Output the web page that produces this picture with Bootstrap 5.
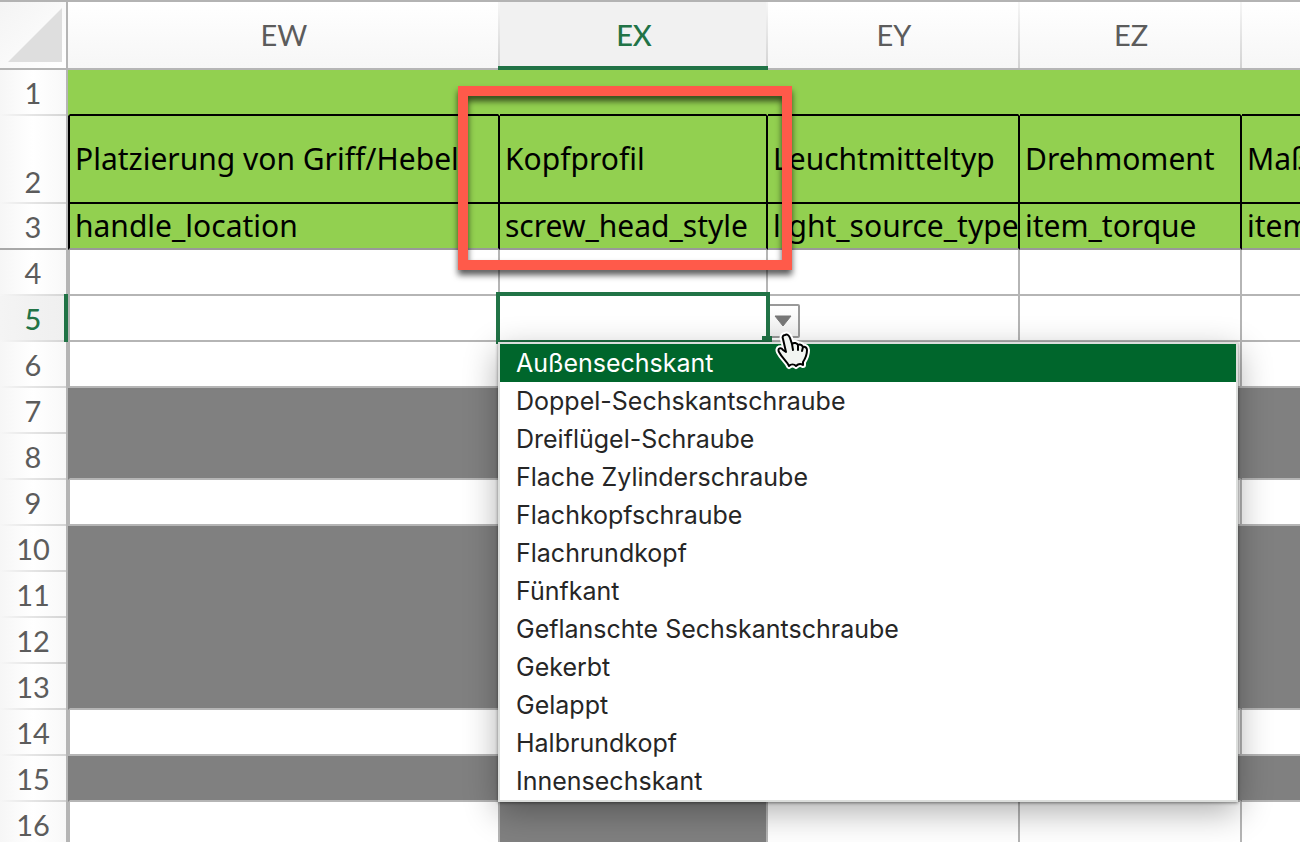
<!DOCTYPE html>
<html lang="de">
<head>
<meta charset="utf-8">
<meta name="viewport" content="width=device-width, initial-scale=1">
<title>Tabelle</title>
<link href="https://cdn.jsdelivr.net/npm/bootstrap@5.3.0/dist/css/bootstrap.min.css" rel="stylesheet">
<style>
:root { --line:#b5b5b5; --accent:#217346; --lime:#92d050; --gray:#808080; }
html, body { height:100%; }
body { font-family:Lato,"Liberation Sans",sans-serif; font-size:29px; line-height:36px; color:#000; background:#fff; }
.sheet { table-layout:fixed; border-collapse:separate; border-spacing:0; border-top:2px solid #b3b3b3; }
.sheet th, .sheet td { padding:0; white-space:nowrap; height:46px; }
.sheet thead th { height:68px; font-weight:400; text-align:center; color:#5c5c5c; background:linear-gradient(#fff,#f6f6f6); border-bottom:2px solid var(--line); position:relative; }
.sheet thead th::after { content:""; position:absolute; right:0; top:0; bottom:0; width:2px; background:linear-gradient(#f6f6f6,#d2d2d2); }
.sheet thead th:last-child::after { display:none; }
.sheet thead th.corner { background:linear-gradient(135deg,#f4f4f4,#fff); }
.sheet thead th.corner::after { background:var(--line); }
.corner svg { display:block; margin-left:8px; }
.sheet thead th.picked { color:var(--accent); background:#f1f1f1; font-weight:500; }
.sheet thead th.picked::before { content:""; position:absolute; left:-2px; right:0; bottom:-2px; height:4px; background:var(--accent); z-index:1; }
.sheet tbody th { font-weight:400; text-align:center; color:#5c5c5c; vertical-align:middle; position:relative; background:linear-gradient(90deg,#f6f6f6,#fff 50%,#f8f8f8); border-right:2px solid var(--line); }
.sheet tbody th::after { content:""; position:absolute; left:0; right:0; bottom:0; height:2px; background:linear-gradient(90deg,#f6f6f6,#d4d4d4); }
.sheet tbody th.picked { color:var(--accent); background:linear-gradient(90deg,#f4f4f4,#efefef); font-weight:500; }
.sheet tbody th.picked::before { content:""; position:absolute; right:-2px; top:-2px; bottom:0; width:4px; background:var(--accent); z-index:1; }
.sheet td { border-right:2px solid var(--line); border-bottom:2px solid var(--line); }
.sheet td:nth-child(2) { border-left:2px solid var(--line); }
.sheet .band td { background:var(--lime); border-color:var(--lime); border-bottom-color:#000; }
.sheet .heads td, .sheet .keys td { background:var(--lime); border-color:#000; vertical-align:middle; }
.sheet .heads td, .sheet .heads th { height:88px; }
.sheet .heads th { vertical-align:bottom; padding-bottom:4px; }
.sheet .keys td { border-bottom-color:#999; }
.sheet .keys th::after { background:#a8a8a8; }
.sheet .off td { background:var(--gray); border-color:var(--gray); }
.sheet .off.last td { border-bottom-color:var(--line); }
.sheet td.off-cell { background:var(--gray); border-bottom-color:var(--gray); }
.sheet td:last-child { border-right:0; }
.cell-text { display:block; overflow:hidden; padding-left:5px; font-family:"Noto Sans",sans-serif; font-size:30px; line-height:42px; font-variant-ligatures:none; }
.marker { position:absolute; left:-42px; right:-26px; top:-30px; bottom:-68px; border:10px solid #ff5a4a; filter:drop-shadow(0 5px 3px rgba(0,0,0,.65)); z-index:3; pointer-events:none; }
.selection { position:absolute; inset:-4px; border:4px solid var(--accent); z-index:3; pointer-events:none; }
.selection::after { content:""; position:absolute; right:-6px; bottom:-2px; width:10px; height:6px; background:var(--accent); }
.sheet .btn-open { position:absolute; left:100%; top:8px; width:34px; height:34px; border:2px solid #999; border-radius:2px; background:linear-gradient(#fff,#f0f0f0); z-index:2; }
.choices { left:-2px; top:calc(100% + 2px); width:740px; padding:0; margin:0; border:2px solid #dcdedc; border-radius:0; font:25px/38px Inter,"Liberation Sans",sans-serif; box-shadow:0 10px 32px rgba(0,0,0,.32),0 1px 3px rgba(0,0,0,.45); z-index:4; }
.choices .dropdown-item { padding:0 16px; color:#262626; line-height:38px; }
.choices .dropdown-item.active { background:#00662c; color:#fff; }
.pointer { position:absolute; left:274px; top:34px; z-index:5; pointer-events:none; }
</style>
</head>
<body class="overflow-hidden">
<main>
<table class="sheet w-100">
<colgroup><col style="width:68px"><col style="width:432px"><col style="width:268px"><col style="width:252px"><col style="width:222px"><col></colgroup>
<thead>
<tr><th class="corner" aria-label="Alles"><svg width="54" height="54" viewBox="0 0 54 54"><path d="M54 0V54H0Z" fill="#dedede"/></svg></th><th>EW</th><th class="picked">EX</th><th>EY</th><th>EZ</th><th></th></tr>
</thead>
<tbody>
<tr class="band"><th>1</th><td></td><td></td><td></td><td></td><td></td></tr>
<tr class="heads"><th>2</th><td><span class="cell-text">Platzierung von Griff/Hebel</span></td><td class="position-relative"><span class="cell-text">Kopfprofil</span><div class="marker"></div></td><td><span class="cell-text">Leuchtmitteltyp</span></td><td><span class="cell-text">Drehmoment</span></td><td><span class="cell-text">Maß</span></td></tr>
<tr class="keys"><th>3</th><td><span class="cell-text">handle_location</span></td><td><span class="cell-text">screw_head_style</span></td><td><span class="cell-text">light_source_type</span></td><td><span class="cell-text">item_torque</span></td><td><span class="cell-text">item</span></td></tr>
<tr><th>4</th><td></td><td></td><td></td><td></td><td></td></tr>
<tr><th class="picked">5</th><td></td><td class="position-relative">
<div class="selection"></div>
<button type="button" class="btn btn-open p-0 d-flex align-items-center justify-content-center" aria-label="Liste öffnen" aria-expanded="true"><svg width="18" height="12" viewBox="0 0 18 12"><path d="M1 1H17L9 11Z" fill="#777" stroke="#777" stroke-linejoin="round"/></svg></button>
<div class="dropdown-menu show choices">
<button type="button" class="dropdown-item active">Außensechskant</button>
<button type="button" class="dropdown-item">Doppel-Sechskantschraube</button>
<button type="button" class="dropdown-item">Dreiflügel-Schraube</button>
<button type="button" class="dropdown-item">Flache Zylinderschraube</button>
<button type="button" class="dropdown-item">Flachkopfschraube</button>
<button type="button" class="dropdown-item">Flachrundkopf</button>
<button type="button" class="dropdown-item">Fünfkant</button>
<button type="button" class="dropdown-item">Geflanschte Sechskantschraube</button>
<button type="button" class="dropdown-item">Gekerbt</button>
<button type="button" class="dropdown-item">Gelappt</button>
<button type="button" class="dropdown-item">Halbrundkopf</button>
<button type="button" class="dropdown-item">Innensechskant</button>
</div>
<svg class="pointer" width="36" height="40" viewBox="0 0 36 40" stroke-linejoin="round" stroke-linecap="round"><path d="M11 5C13 4 15 5 16 8L18 14C20 12 23 13 24 15C26 14 28 15 29 17C31 16 33 18 33 20C33 26 31 29 29 32L29 35C26 33 24 34 22 36C20 34 17 34 15 36C13 31 8 28 5 22C3 18 7 17 9 20L12 22L9 9C8 7 9 5 11 5Z" fill="#fff" stroke="#fff" stroke-width="6"/><path d="M11 5C13 4 15 5 16 8L18 14C20 12 23 13 24 15C26 14 28 15 29 17C31 16 33 18 33 20C33 26 31 29 29 32L29 35C26 33 24 34 22 36C20 34 17 34 15 36C13 31 8 28 5 22C3 18 7 17 9 20L12 22L9 9C8 7 9 5 11 5ZM18 14L19 20M24 15L24 20M29 17L28 21" fill="#f2f5f2" stroke="#000" stroke-width="2"/></svg>
</td><td></td><td></td><td></td></tr>
<tr><th>6</th><td></td><td></td><td></td><td></td><td></td></tr>
<tr class="off"><th>7</th><td></td><td></td><td></td><td></td><td></td></tr>
<tr class="off last"><th>8</th><td></td><td></td><td></td><td></td><td></td></tr>
<tr><th>9</th><td></td><td></td><td></td><td></td><td></td></tr>
<tr class="off"><th>10</th><td></td><td></td><td></td><td></td><td></td></tr>
<tr class="off"><th>11</th><td></td><td></td><td></td><td></td><td></td></tr>
<tr class="off"><th>12</th><td></td><td></td><td></td><td></td><td></td></tr>
<tr class="off last"><th>13</th><td></td><td></td><td></td><td></td><td></td></tr>
<tr><th>14</th><td></td><td></td><td></td><td></td><td></td></tr>
<tr class="off last"><th>15</th><td></td><td></td><td></td><td></td><td></td></tr>
<tr><th>16</th><td></td><td class="off-cell"></td><td></td><td></td><td></td></tr>
</tbody>
</table>
</main>
<script src="https://cdn.jsdelivr.net/npm/bootstrap@5.3.0/dist/js/bootstrap.bundle.min.js"></script>
</body>
</html>
